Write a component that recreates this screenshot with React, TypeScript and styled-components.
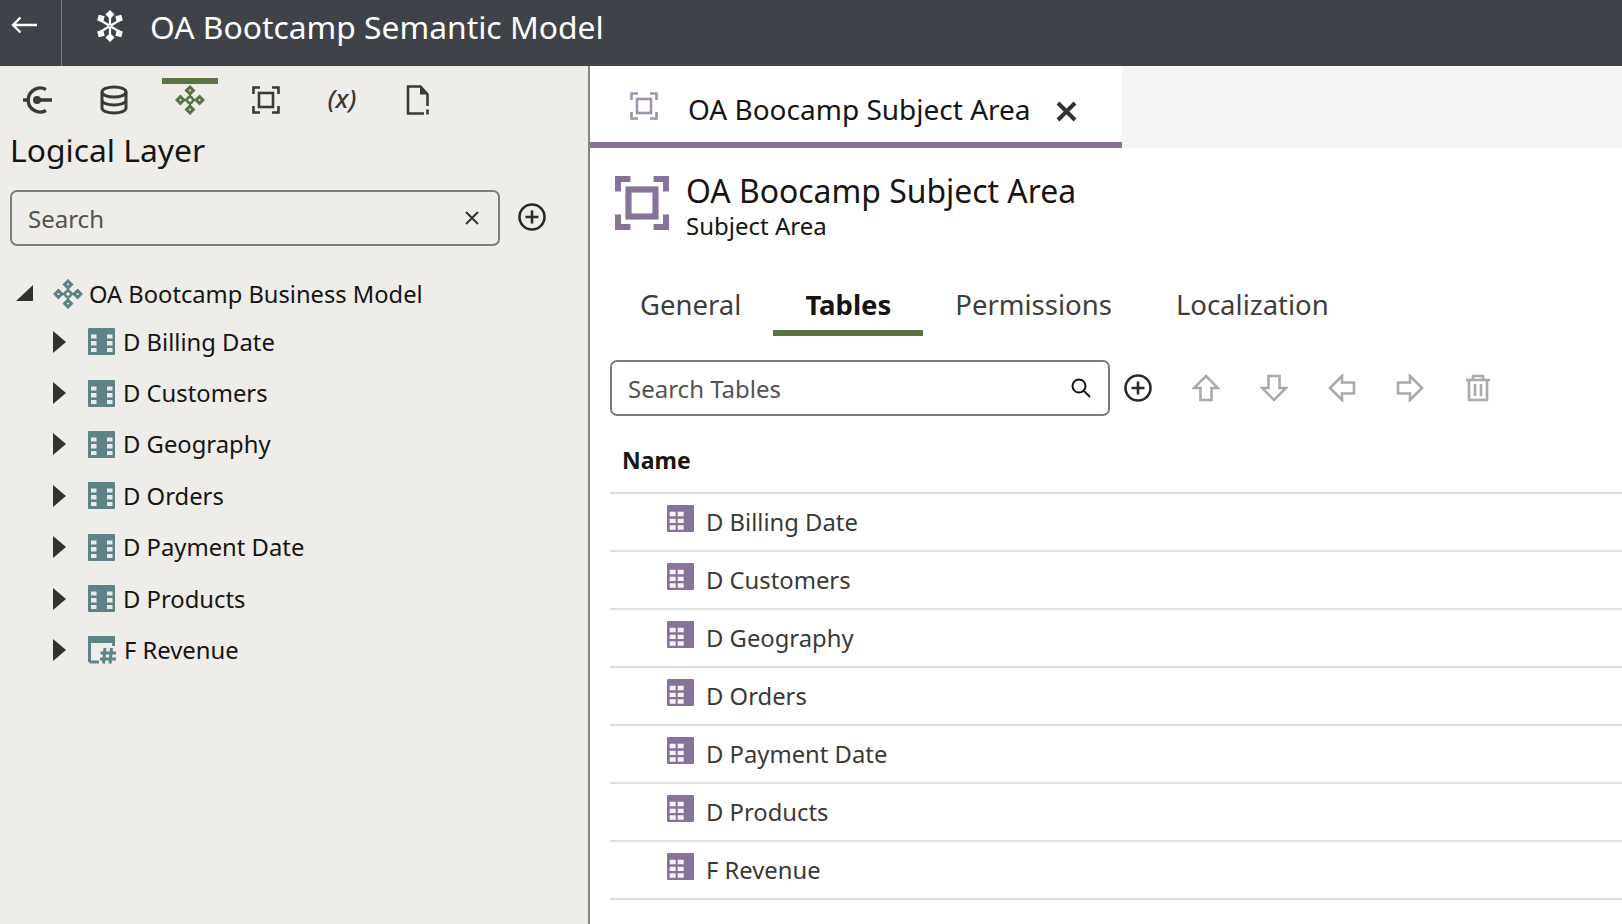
import React from 'react';
import styled, { createGlobalStyle } from 'styled-components';

const GlobalStyle = createGlobalStyle`
  html, body {
    margin: 0;
    padding: 0;
    height: 100%;
    overflow: hidden;
    background: #fff;
  }
  body {
    font-family: "Noto Sans", "Open Sans", sans-serif;
    color: #161513;
  }
  * { box-sizing: border-box; }
`;

const Page = styled.div`
  width: 1622px;
  height: 924px;
  display: flex;
  flex-direction: column;
  overflow: hidden;
`;

const Header = styled.header`
  height: 66px;
  flex: none;
  display: flex;
  align-items: center;
  background: #3f4349;
  color: #fff;
`;

const BackCell = styled.div`
  width: 62px;
  height: 100%;
  flex: none;
  display: flex;
  align-items: center;
  padding: 0 0 16px 11px;
  border-right: 1px solid #7d8085;
`;

const AppMark = styled.div`
  display: flex;
  margin: -14px 0 0 32px;
`;

const AppTitle = styled.h1`
  margin: -14px 0 0 24px;
  font-size: 31.8px;
  font-weight: 400;
  white-space: nowrap;
`;

const Body = styled.div`
  flex: 1;
  display: flex;
  min-height: 0;
`;

const Sidebar = styled.aside`
  width: 590px;
  flex: none;
  background: #eeedea;
  border-right: 2px solid #85857f;
`;

const ModeBar = styled.div`
  height: 64px;
  padding: 12px 0 0 18px;
  display: flex;
  gap: 36px;
`;

const ModeButton = styled.div<{ $active?: boolean }>`
  width: 40px;
  height: 44px;
  display: flex;
  align-items: center;
  justify-content: center;
  color: ${p => (p.$active ? '#5b7345' : '#3a3a38')};
  position: relative;

  &:before {
    content: '';
    display: ${p => (p.$active ? 'block' : 'none')};
    position: absolute;
    top: 0;
    left: -8px;
    right: -8px;
    height: 6px;
    background: #5b7345;
  }
`;

const VariableMark = styled.span`
  margin-top: -4px;
  font-size: 26px;
  font-style: italic;
  font-weight: 500;
  white-space: nowrap;
`;

const LayerTitle = styled.h2`
  margin: 0;
  padding-left: 10px;
  font-size: 31.8px;
  line-height: 40px;
  font-weight: 400;
`;

const SearchRow = styled.div`
  display: flex;
  align-items: center;
  gap: 18px;
  margin: 20px 0 0 10px;
`;

const SearchBox = styled.div<{ $width: number }>`
  width: ${p => p.$width}px;
  height: 56px;
  flex: none;
  display: flex;
  align-items: center;
  justify-content: space-between;
  padding: 0 18px 0 16px;
  border: 2px solid #7f7d78;
  border-radius: 7px;
  font-size: 24px;
  color: #55534f;
`;

const SearchGlyph = styled.div`
  display: flex;
  margin-right: -2px;
`;

const AddButton = styled.div`
  display: flex;
  color: #2b2a28;
`;

const SidebarPlus = styled(AddButton)`
  margin-top: -2px;
`;

const Tree = styled.div`
  margin-top: 25px;
`;

const RootRow = styled.div`
  height: 45px;
  display: flex;
  align-items: center;
  padding-left: 16px;
  font-size: 23.7px;
`;

const TreeRow = styled.div`
  height: 51.4px;
  display: flex;
  align-items: center;
  padding-left: 53px;
  font-size: 23.8px;
`;

const TreeIcon = styled.div`
  display: flex;
  margin: 0 8px 0 22px;
`;

const RootIcon = styled.div`
  display: flex;
  margin: 0 6px 0 19px;
`;

const Main = styled.main`
  flex: 1;
  min-width: 0;
  background: #fff;
`;

const TabStrip = styled.div`
  height: 82px;
  display: flex;
  background: #f5f5f5;
`;

const OpenTab = styled.div`
  width: 532px;
  display: flex;
  align-items: center;
  padding: 10px 0 0 40px;
  background: #fff;
  border-bottom: 6px solid #877299;
  font-size: 28px;
  white-space: nowrap;
`;

const OpenTabIcon = styled.div`
  display: flex;
  margin-top: -6px;
`;

const OpenTabLabel = styled.span`
  margin: 0 25px 0 30px;
`;

const OpenTabClose = styled.div`
  display: flex;
  margin-top: 4px;
`;

const ObjectHeader = styled.div`
  display: flex;
  align-items: center;
  gap: 17px;
  padding: 23px 0 0 25px;
`;

const ObjectIcon = styled.div`
  display: flex;
  margin-top: -7px;
`;

const ObjectTitle = styled.div`
  font-size: 31.9px;
  line-height: 39px;
`;

const ObjectType = styled.div`
  font-size: 24px;
  line-height: 32px;
`;

const SectionTabs = styled.div`
  display: flex;
  margin: 36px 0 0 18px;
`;

const SectionTab = styled.div<{ $active?: boolean }>`
  height: 58px;
  padding: 0 32px;
  display: flex;
  align-items: center;
  font-size: 27.5px;
  font-weight: ${p => (p.$active ? 700 : 400)};
  color: ${p => (p.$active ? '#161513' : '#3e3d3a')};
  border-bottom: 6px solid ${p => (p.$active ? '#5b7345' : 'transparent')};
`;

const TableTools = styled.div`
  display: flex;
  align-items: center;
  margin: 24px 0 0 20px;
`;

const ToolIcons = styled.div`
  display: flex;
  margin-left: 40px;
  gap: 40px;
  color: #aaaaaa;
`;

const ToolIcon = styled.div`
  display: flex;
`;

const TablePlus = styled(AddButton)`
  margin-left: 14px;
`;

const NameHeading = styled.div`
  height: 78px;
  margin-left: 20px;
  padding: 12px 0 0 12px;
  display: flex;
  align-items: center;
  font-size: 23px;
  font-weight: 700;
  border-bottom: 2px solid #dfdfdc;
`;

const TableRow = styled.div`
  height: 58px;
  margin-left: 20px;
  padding-left: 57px;
  display: flex;
  align-items: center;
  gap: 12px;
  font-size: 23.8px;
  color: #3a3936;
  border-bottom: 2px solid #dfdfdc;
`;

const RowIcon = styled.div`
  display: flex;
  margin-top: -7px;
`;

const RowLabel = styled.span`
  margin-top: 0;
`;

const Collapse = ({ open }: { open?: boolean }) =>
  open ? (
    <svg width="18" height="17" viewBox="0 0 18 17"><path d="M17 0v16H0z" fill="#33322e" /></svg>
  ) : (
    <svg width="13" height="22" viewBox="0 0 13 22"><path d="M0 0l13 11L0 22z" fill="#33322e" /></svg>
  );

const ModelGlyph = ({ size, color }: { size: number; color: string }) => (
  <svg width={size} height={size} viewBox="0 0 30 30" fill="none" stroke={color} strokeWidth="3">
    <path d="M15 2l3.400 3.400L15 8.800l-3.400-3.400zM15 21.200l3.400 3.400L15 28l-3.400-3.400zM5.400 11.600L8.800 15l-3.400 3.400L2 15zM24.600 11.600L28 15l-3.400 3.400-3.400-3.400z" />
    <circle cx="15" cy="15" r="3" strokeWidth="2.400" />
    <path d="M15 8.800V12M15 18v3.200M8.800 15H12M18 15h3.200" strokeWidth="2.400" />
  </svg>
);

const AreaGlyph = ({ size, color, weight }: { size: number; color: string; weight: number }) => (
  <svg width={size} height={size} viewBox="0 0 28 28" fill="none" stroke={color} strokeWidth={weight}>
    <path d="M1.500 8V1.500H8M20 1.500h6.500V8M26.500 20v6.500H20M8 26.500H1.500V20" />
    <rect x="7" y="7" width="14" height="14" />
  </svg>
);

const ColumnTable = () => (
  <svg width="27" height="27" viewBox="0 0 27 27">
    <rect width="27" height="27" rx="1" fill="#5f8286" />
    <path d="M3 6.500h5.500v4H3zM3 13h5.500v4.500H3zM3 20h5.500v4H3zM19 6.500h5.500v4H19zM19 13h5.500v4.500H19zM19 20h5.500v4H19z" fill="#e9ecea" />
  </svg>
);

const FactTable = () => (
  <svg width="28" height="28" viewBox="0 0 28 28" fill="none">
    <path d="M1.500 26V1.500h24V10M1.500 26H11" stroke="#5f8286" strokeWidth="3" />
    <rect x="1" y="1" width="25" height="6" fill="#5f8286" />
    <path d="M17 12l-1.500 15.500M23.500 12L22 27.500M12.500 17H28M12 23h16" stroke="#5f8286" strokeWidth="3" />
  </svg>
);

const PurpleTable = () => (
  <svg width="27" height="27" viewBox="0 0 27 27">
    <rect width="27" height="27" rx="1" fill="#877299" />
    <path d="M2.700 6.700h6v4.600h-6zM10.700 6.700h6v4.600h-6zM2.700 13.700h6V18h-6zM10.700 13.700h6V18h-6zM2.700 20.300h6v4.400h-6zM10.700 20.300h6v4.400h-6z" fill="#f6f3f8" />
  </svg>
);

const PlusCircle = () => (
  <svg width="28" height="28" viewBox="0 0 28 28" fill="none" stroke="currentColor" strokeWidth="2.600">
    <circle cx="14" cy="14" r="12.500" />
    <path d="M14 7.500v13M7.500 14h13" />
  </svg>
);

const treeItems = ['D Billing Date', 'D Customers', 'D Geography', 'D Orders', 'D Payment Date', 'D Products', 'F Revenue'];

const arrowPaths = [
  'M14 2L26 14h-6.500v12h-11V14H2z',
  'M8.500 2h11v12H26L14 26 2 14h6.500z',
  'M2 14L14 2v6.500h12v11H14V26z',
  'M26 14L14 2v6.500H2v11h12V26z',
];

export default function App() {
  return (
    <Page>
      <GlobalStyle />
      <Header>
        <BackCell>
          <svg width="26" height="18" viewBox="0 0 26 18" fill="none" stroke="#fff" strokeWidth="2.400">
            <path d="M26 9H2M9.500 1.500L2 9l7.500 7.500" />
          </svg>
        </BackCell>
        <AppMark>
          <svg width="32" height="32" viewBox="0 0 32 32" fill="none" stroke="#fff" strokeWidth="2.200">
            <path d="M16 5v22M6 10l20 12M26 10L6 22" />
            <path d="M16 1.500l3 3-3 3-3-3zM16 24.500l3 3-3 3-3-3zM5.500 6l3.800 1-1 3.800-3.800-1zM26.500 6l1 3.800-3.800 1-1-3.800zM5.500 26l-1-3.800 3.800-1 1 3.800zM26.500 26l-3.800-1 1-3.800 3.800 1z" fill="#fff" />
            <circle cx="16" cy="16" r="1.500" fill="#3f4349" strokeWidth="1.500" />
          </svg>
        </AppMark>
        <AppTitle>OA Bootcamp Semantic Model</AppTitle>
      </Header>
      <Body>
        <Sidebar>
          <ModeBar>
            <ModeButton>
              <svg width="32" height="30" viewBox="0 0 32 30" fill="none" stroke="currentColor" strokeWidth="3.400">
                <path d="M24 4.500A12 12 0 1 0 24 25.500" />
                <path d="M1 15h5M15 15h15" />
                <circle cx="15" cy="15" r="4" fill="currentColor" stroke="none" />
              </svg>
            </ModeButton>
            <ModeButton>
              <svg width="28" height="30" viewBox="0 0 28 30" fill="none" stroke="currentColor" strokeWidth="3">
                <ellipse cx="14" cy="7" rx="12" ry="5" />
                <path d="M2 7v16c0 3 5.500 5 12 5s12-2 12-5V7M2 15c0 3 5.500 5 12 5s12-2 12-5" />
              </svg>
            </ModeButton>
            <ModeButton $active>
              <ModelGlyph size={30} color="#5b7345" />
            </ModeButton>
            <ModeButton>
              <AreaGlyph size={28} color="#3a3a38" weight={2.600} />
            </ModeButton>
            <ModeButton>
              <VariableMark>(x)</VariableMark>
            </ModeButton>
            <ModeButton>
              <svg width="24" height="30" viewBox="0 0 24 30" fill="none" stroke="currentColor" strokeWidth="2.600">
                <path d="M18 28.500H2V1.500h12.500l7 8V21M21.500 24.500v5" />
                <path d="M14 1.500l8 8h-8z" fill="currentColor" stroke="none" />
              </svg>
            </ModeButton>
          </ModeBar>
          <LayerTitle>Logical Layer</LayerTitle>
          <SearchRow>
            <SearchBox $width={490}>
              Search
              <svg width="16" height="16" viewBox="0 0 16 16" fill="none" stroke="#33322e" strokeWidth="2">
                <path d="M2 2l12 12M14 2L2 14" />
              </svg>
            </SearchBox>
            <SidebarPlus><PlusCircle /></SidebarPlus>
          </SearchRow>
          <Tree>
            <RootRow>
              <Collapse open />
              <RootIcon><ModelGlyph size={30} color="#5f8286" /></RootIcon>
              OA Bootcamp Business Model
            </RootRow>
            {treeItems.map(name => (
              <TreeRow key={name}>
                <Collapse />
                <TreeIcon>{name.startsWith('F') ? <FactTable /> : <ColumnTable />}</TreeIcon>
                {name}
              </TreeRow>
            ))}
          </Tree>
        </Sidebar>
        <Main>
          <TabStrip>
            <OpenTab>
              <OpenTabIcon><AreaGlyph size={28} color="#a091ad" weight={2.600} /></OpenTabIcon>
              <OpenTabLabel>OA Boocamp Subject Area</OpenTabLabel>
              <OpenTabClose>
                <svg width="21" height="21" viewBox="0 0 21 21" fill="none" stroke="#33322e" strokeWidth="4">
                  <path d="M2 2l17 17M19 2L2 19" />
                </svg>
              </OpenTabClose>
            </OpenTab>
          </TabStrip>
          <ObjectHeader>
            <ObjectIcon><AreaGlyph size={54} color="#877299" weight={3.200} /></ObjectIcon>
            <div>
              <ObjectTitle>OA Boocamp Subject Area</ObjectTitle>
              <ObjectType>Subject Area</ObjectType>
            </div>
          </ObjectHeader>
          <SectionTabs>
            <SectionTab>General</SectionTab>
            <SectionTab $active>Tables</SectionTab>
            <SectionTab>Permissions</SectionTab>
            <SectionTab>Localization</SectionTab>
          </SectionTabs>
          <TableTools>
            <SearchBox $width={500}>
              Search Tables
              <SearchGlyph>
                <svg width="22" height="22" viewBox="0 0 22 22" fill="none" stroke="#161513" strokeWidth="2">
                  <circle cx="9" cy="9" r="6.500" />
                  <path d="M14 14l6 6" />
                </svg>
              </SearchGlyph>
            </SearchBox>
            <TablePlus><PlusCircle /></TablePlus>
            <ToolIcons>
              {arrowPaths.map(d => (
                <ToolIcon key={d}>
                  <svg width="28" height="28" viewBox="0 0 28 28" fill="none" stroke="currentColor" strokeWidth="2.600">
                    <path d={d} />
                  </svg>
                </ToolIcon>
              ))}
              <ToolIcon>
                <svg width="28" height="28" viewBox="0 0 28 28" fill="none" stroke="currentColor" strokeWidth="2.600">
                  <path d="M2 6h24M9 6V2h10v4M5 6v20h18V6M11 10v12M17 10v12" />
                </svg>
              </ToolIcon>
            </ToolIcons>
          </TableTools>
          <NameHeading>Name</NameHeading>
          {treeItems.map(name => (
            <TableRow key={name}>
              <RowIcon><PurpleTable /></RowIcon>
              <RowLabel>{name}</RowLabel>
            </TableRow>
          ))}
        </Main>
      </Body>
    </Page>
  );
}
